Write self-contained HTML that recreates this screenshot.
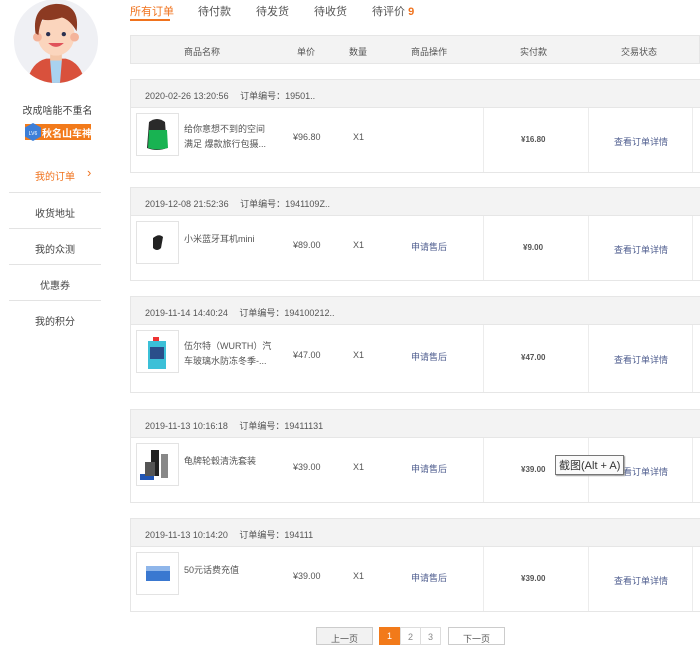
<!DOCTYPE html>
<html><head><meta charset="utf-8">
<style>
*{margin:0;padding:0;box-sizing:border-box}
body{width:700px;height:641px;overflow:hidden;background:#fff;font-family:"Liberation Sans","Noto Sans CJK SC",sans-serif;color:#555;position:relative;font-size:9px}
.a{position:absolute;white-space:nowrap}
.menu{position:absolute;left:9px;width:92px;text-align:center;font-size:10px;color:#444}
.line{position:absolute;left:9px;width:92px;height:1px;background:#e3e3e3}
.tab{position:absolute;top:3px;font-size:11px;color:#555}
.blk{position:absolute;left:130px;width:570px;border:1px solid #e6e6e6;border-right:none}
.bh{height:28px;background:#f3f3f3;border-bottom:1px solid #e6e6e6;position:relative}
.bb{position:relative;height:64px}
.div{position:absolute;top:0;bottom:0;width:1px;background:#ececec}
.img{position:absolute;left:5px;top:5px;width:43px;height:43px;border:1px solid #e3e3e3;background:#fff}
.lnk{color:#4f5e8f}
</style></head><body>
<!-- avatar -->
<svg class="a" style="left:13px;top:-2px" width="86" height="86" viewBox="0 0 88 88">
<defs><clipPath id="c"><circle cx="44" cy="44" r="43"/></clipPath></defs>
<circle cx="44" cy="44" r="43" fill="#eff0f4"/>
<g clip-path="url(#c)">
<path d="M14 88 Q18 66 34 62 L54 62 Q70 66 74 88Z" fill="#d9513c"/>
<path d="M38 64 L50 64 L48 88 L40 88Z" fill="#a9d2ef"/>
<rect x="38" y="50" width="12" height="14" fill="#f4c6a8"/>
<ellipse cx="44" cy="38" rx="19" ry="21" fill="#fbd5bd"/>
<circle cx="25" cy="40" r="4.5" fill="#f4b49b"/><circle cx="63" cy="40" r="4.5" fill="#f4b49b"/>
<path d="M23 36 Q19 8 44 6 Q69 6 65 34 Q58 22 50 20 Q38 24 30 22 Q27 28 26 38Z" fill="#8c3a22"/>
<circle cx="36" cy="37" r="2.2" fill="#2a3050"/><circle cx="52" cy="37" r="2.2" fill="#2a3050"/>
<path d="M36 46 Q44 54 52 46Z" fill="#e0525a"/>
</g></svg>
<div class="a" style="left:0;width:115px;text-align:center;top:102px;font-size:10px;color:#444">改成啥能不重名</div>
<div class="a" style="left:25px;top:124px;width:66px;height:16px;background:#f27a1a"></div>
<svg class="a" style="left:24px;top:122px" width="18" height="20"><polygon points="9,1 17,5.5 17,14.5 9,19 1,14.5 1,5.5" fill="#3d7fd8"/><text x="9" y="13" font-size="5" fill="#fff" text-anchor="middle" font-family="Liberation Sans">LV6</text></svg>
<div class="a" style="left:42px;top:125px;font-size:10px;color:#fff;font-weight:bold">秋名山车神</div>
<div class="menu" style="top:168px;color:#f0731e">我的订单</div>
<div class="a" style="left:87px;top:165px;font-size:13px;color:#f0731e">›</div>
<div class="line" style="top:192px"></div>
<div class="menu" style="top:205px">收货地址</div>
<div class="line" style="top:228px"></div>
<div class="menu" style="top:241px">我的众测</div>
<div class="line" style="top:264px"></div>
<div class="menu" style="top:277px">优惠券</div>
<div class="line" style="top:300px"></div>
<div class="menu" style="top:313px">我的积分</div>

<!-- tabs -->
<div class="tab" style="left:130px;color:#f0731e">所有订单</div>
<div class="a" style="left:130px;top:19px;width:40px;height:2px;background:#f0731e"></div>
<div class="tab" style="left:198px">待付款</div>
<div class="tab" style="left:256px">待发货</div>
<div class="tab" style="left:314px">待收货</div>
<div class="tab" style="left:372px">待评价 <b style="color:#f0731e">9</b></div>

<!-- table header -->
<div class="a" style="left:130px;top:35px;width:570px;height:29px;background:#f3f3f3;border:1px solid #e6e6e6"></div>
<div class="a" style="top:45px;left:184px">商品名称</div>
<div class="a" style="top:45px;left:297px">单价</div>
<div class="a" style="top:45px;left:349px">数量</div>
<div class="a" style="top:45px;left:411px">商品操作</div>
<div class="a" style="top:45px;left:520px">实付款</div>
<div class="a" style="top:45px;left:621px">交易状态</div>

<!-- blocks -->
<div class="blk" style="top:79px"><div class="bh"><span class="a" style="left:14px;top:9px">2020-02-26 13:20:56　 订单编号：19501..</span></div>
<div class="bb"><div class="img"><svg width="41" height="41"><path d="M12 8 Q20 2 28 8 L30 34 Q20 38 10 34Z" fill="#2a2a2a"/><path d="M12 16 L30 16 L31 34 Q20 37 11 34Z" fill="#18b352"/></svg></div>
<span class="a" style="left:53px;top:14px;line-height:15px">给你意想不到的空间<br>满足 爆款旅行包摄...</span>
<span class="a" style="left:162px;top:24px">¥96.80</span><span class="a" style="left:222px;top:24px">X1</span>
<div class="div" style="left:352px"></div><div class="div" style="left:457px"></div><div class="div" style="left:561px"></div>
<b class="a" style="left:390px;top:27px;font-size:8px">¥16.80</b><span class="a lnk" style="left:483px;top:27px">查看订单详情</span></div></div>

<div class="blk" style="top:187px"><div class="bh"><span class="a" style="left:14px;top:9px">2019-12-08 21:52:36　 订单编号：1941109Z..</span></div>
<div class="bb"><div class="img"><svg width="41" height="41"><path d="M16 16 Q22 11 26 15 L24 26 Q20 30 16 26Z" fill="#222"/></svg></div>
<span class="a" style="left:53px;top:16px">小米蓝牙耳机mini</span>
<span class="a" style="left:162px;top:24px">¥89.00</span><span class="a" style="left:222px;top:24px">X1</span><span class="a lnk" style="left:280px;top:24px">申请售后</span>
<div class="div" style="left:352px"></div><div class="div" style="left:457px"></div><div class="div" style="left:561px"></div>
<b class="a" style="left:392px;top:27px;font-size:8px">¥9.00</b><span class="a lnk" style="left:483px;top:27px">查看订单详情</span></div></div>

<div class="blk" style="top:296px"><div class="bh"><span class="a" style="left:14px;top:9px">2019-11-14 14:40:24　 订单编号：194100212..</span></div>
<div class="bb" style="height:67px"><div class="img"><svg width="41" height="41"><rect x="11" y="10" width="18" height="28" fill="#3bc0d8"/><rect x="13" y="16" width="14" height="12" fill="#2a4e8a"/><rect x="16" y="6" width="6" height="4" fill="#e33"/></svg></div>
<span class="a" style="left:53px;top:14px;line-height:15px">伍尔特（WURTH）汽<br>车玻璃水防冻冬季-...</span>
<span class="a" style="left:162px;top:25px">¥47.00</span><span class="a" style="left:222px;top:25px">X1</span><span class="a lnk" style="left:280px;top:25px">申请售后</span>
<div class="div" style="left:352px"></div><div class="div" style="left:457px"></div><div class="div" style="left:561px"></div>
<b class="a" style="left:390px;top:28px;font-size:8px">¥47.00</b><span class="a lnk" style="left:483px;top:28px">查看订单详情</span></div></div>

<div class="blk" style="top:409px"><div class="bh"><span class="a" style="left:14px;top:9px">2019-11-13 10:16:18　 订单编号：19411131</span></div>
<div class="bb"><div class="img"><svg width="41" height="41"><rect x="14" y="6" width="8" height="26" fill="#222"/><rect x="24" y="10" width="7" height="24" fill="#888"/><rect x="3" y="30" width="14" height="6" fill="#2256b5"/><rect x="8" y="18" width="10" height="14" fill="#555"/></svg></div>
<span class="a" style="left:53px;top:16px">龟牌轮毂清洗套装</span>
<span class="a" style="left:162px;top:24px">¥39.00</span><span class="a" style="left:222px;top:24px">X1</span><span class="a lnk" style="left:280px;top:24px">申请售后</span>
<div class="div" style="left:352px"></div><div class="div" style="left:457px"></div><div class="div" style="left:561px"></div>
<b class="a" style="left:390px;top:27px;font-size:8px">¥39.00</b><span class="a lnk" style="left:483px;top:27px">查看订单详情</span></div></div>

<div class="blk" style="top:518px"><div class="bh"><span class="a" style="left:14px;top:9px">2019-11-13 10:14:20　 订单编号：194111</span></div>
<div class="bb"><div class="img"><svg width="41" height="41"><rect x="9" y="13" width="24" height="15" fill="#3a78d0"/><rect x="9" y="13" width="24" height="5" fill="#8fb6ea"/></svg></div>
<span class="a" style="left:53px;top:16px">50元话费充值</span>
<span class="a" style="left:162px;top:24px">¥39.00</span><span class="a" style="left:222px;top:24px">X1</span><span class="a lnk" style="left:280px;top:24px">申请售后</span>
<div class="div" style="left:352px"></div><div class="div" style="left:457px"></div><div class="div" style="left:561px"></div>
<b class="a" style="left:390px;top:27px;font-size:8px">¥39.00</b><span class="a lnk" style="left:483px;top:27px">查看订单详情</span></div></div>

<!-- tooltip -->
<div class="a" style="left:555px;top:455px;border:1px solid #777;background:#fafafa;font-size:11px;color:#333;padding:1px 3px;box-shadow:1px 1px 1px #999">截图(Alt + A)</div>

<!-- pagination -->
<div class="a" style="left:316px;top:627px;width:57px;height:18px;border:1px solid #ccc;background:#f2f2f2;text-align:center;padding-top:4px">上一页</div>
<div class="a" style="left:379px;top:627px;width:21px;height:18px;background:#f27a1a;color:#fff;text-align:center;padding-top:4px">1</div>
<div class="a" style="left:400px;top:627px;width:21px;height:18px;border:1px solid #ddd;text-align:center;padding-top:4px;color:#888">2</div>
<div class="a" style="left:420px;top:627px;width:21px;height:18px;border:1px solid #ddd;text-align:center;padding-top:4px;color:#888">3</div>
<div class="a" style="left:448px;top:627px;width:57px;height:18px;border:1px solid #ccc;text-align:center;padding-top:4px">下一页</div>
</body></html>
